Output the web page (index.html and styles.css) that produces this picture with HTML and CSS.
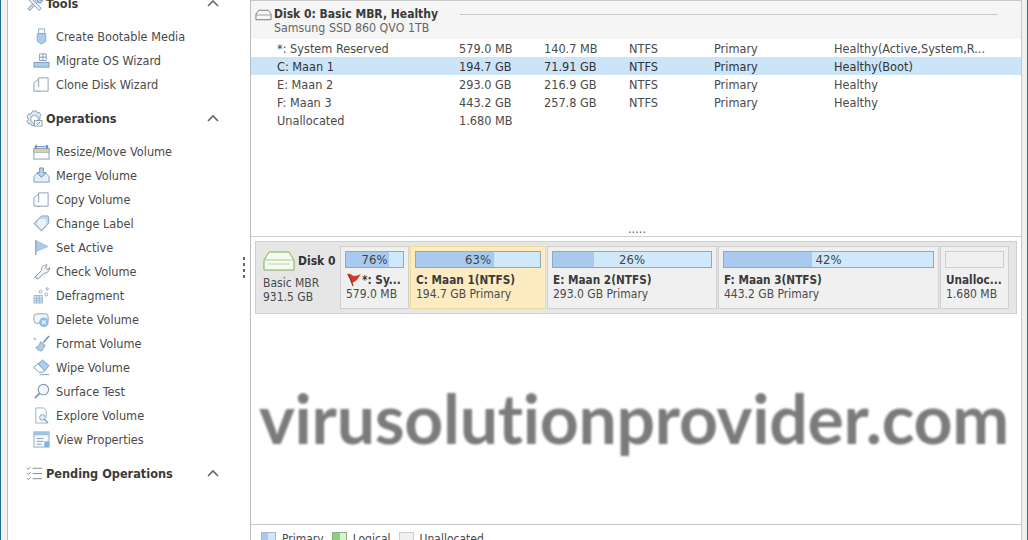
FILE: index.html
```html
<!DOCTYPE html>
<html lang="en">
<head>
    <meta charset="UTF-8">
    <title>Partition Wizard</title>
    <link rel="stylesheet" href="styles.css">
</head>
<body>
    <div class="window">
        <aside class="sidebar">
            <div class="side-inner">
                <div class="group-head tools-head">
                    <svg class="head-icon" viewBox="0 0 18 18"><path d="M2 14.500 12 4l2 2L4 16.500z" fill="#c5def3" stroke="#6f8ba3" stroke-width=".9"/><path d="M4 2l12 12-2 2.500L2 4z" fill="#eef3f7" stroke="#6f8ba3" stroke-width=".9"/><path d="M11 3c1-2 4-2 5.500 0l-2 1 1 2 2-.500c0 2-2 3.500-4 3z" fill="#b9d4ea" stroke="#6f8ba3" stroke-width=".8"/></svg>
                    <span>Tools</span>
                    <svg class="chevron" viewBox="0 0 12 8"><path d="M1 7l5-5 5 5" fill="none" stroke="#666" stroke-width="1.600"/></svg>
                </div>
                <ul class="items">
                    <li><svg class="icon" viewBox="0 0 18 18"><rect x="6" y="1" width="6" height="5" fill="#fff" stroke="#8aa9c4"/><path d="M4.500 6h9v8l-4.500 3-4.500-3z" fill="#a9cdee" stroke="#8aa9c4"/></svg>Create Bootable Media</li>
                    <li><svg class="icon" viewBox="0 0 18 18"><path d="M7 2h7v7H7zM10.500 2v7M7 5.500h7" fill="#fff" stroke="#7f9db9"/><rect x="1" y="11" width="16" height="5" fill="#a9cdee" stroke="#7f9db9"/></svg>Migrate OS Wizard</li>
                    <li><svg class="icon" viewBox="0 0 18 18"><path d="M1 16V7l4-3h3v12z" fill="#f4f8fb" stroke="#8aa0b3"/><path d="M6 12V2h10v14H4" fill="#fff" stroke="#8aa0b3"/></svg>Clone Disk Wizard</li>
                </ul>
                <div class="group-head">
                    <svg class="head-icon" viewBox="0 0 18 18"><path d="M7 1h4l1 2 2-.500 2 3-1.500 2 .500 2-2 2v-2a4 4 0 1 0-5 4l1 3H6l-1-2-2 .500-2-3 1.500-2L1 7l2-3 2 .500z" fill="#dbe8f2" stroke="#6f8ba3" stroke-width=".8"/><rect x="9" y="11" width="8" height="6" fill="#fff" stroke="#6f8ba3" stroke-width=".8"/><path d="M11 14l1.500 1.500 2.500-3" fill="none" stroke="#4f9a5b"/></svg>
                    <span>Operations</span>
                    <svg class="chevron" viewBox="0 0 12 8"><path d="M1 7l5-5 5 5" fill="none" stroke="#666" stroke-width="1.600"/></svg>
                </div>
                <ul class="items">
                    <li><svg class="icon" viewBox="0 0 18 18"><rect x="1" y="6" width="16" height="11" fill="#fff" stroke="#7f9db9"/><rect x="1" y="6" width="16" height="4" fill="#e9c9a0" stroke="#7f9db9" stroke-width=".6"/><path d="M2 4h14M2 4l2-2M2 4l2 2M16 4l-2-2M16 4l-2 2" fill="none" stroke="#4f86b8" stroke-width="1.200"/></svg>Resize/Move Volume</li>
                    <li><svg class="icon" viewBox="0 0 18 18"><path d="M1 10l3-3h10l3 3v6H1z" fill="#e5eff7" stroke="#7f9db9"/><path d="M7 1h4v5h3l-5 5-5-5h3z" fill="#b7d5ee" stroke="#6f8ba3"/></svg>Merge Volume</li>
                    <li><svg class="icon" viewBox="0 0 18 18"><path d="M1 16V7l4-3h3v12z" fill="#f4f8fb" stroke="#8aa0b3"/><path d="M6 12V2h10v14H4" fill="#fff" stroke="#8aa0b3"/></svg>Copy Volume</li>
                    <li><svg class="icon" viewBox="0 0 18 18"><path d="M9 1h7l1 7-8 9-8-8z" fill="#c5def3" stroke="#7f9db9"/><path d="M7 3.500h7l1 6-6 6-6-6z" fill="#e9f3fb" stroke="#a5c0d6" stroke-width=".6"/></svg>Change Label</li>
                    <li><svg class="icon" viewBox="0 0 18 18"><path d="M3 1v16" stroke="#7f9db9" stroke-width="1.400"/><path d="M4 2l12 6-12 5z" fill="#a9cdee" stroke="#8aa9c4" stroke-width=".6"/></svg>Set Active</li>
                    <li><svg class="icon" viewBox="0 0 18 18"><path d="M2 15l7-7c-1-3 2-6 6-6l-2 3 2 2 2.500-2c0 4-3 6-6 6l-6 6z" fill="#eef4f9" stroke="#7f94a8"/></svg>Check Volume</li>
                    <li><svg class="icon" viewBox="0 0 18 18"><path d="M1 9h9v8H1zM4 9v8M7 9v8M1 12h9M1 14.500h9" fill="#dce9f4" stroke="#8aa9c4" stroke-width=".8"/><circle cx="8" cy="5" r="1.500" fill="#fff" stroke="#7f94a8" stroke-width=".8"/><circle cx="15" cy="2" r="1.200" fill="#fff" stroke="#7f94a8" stroke-width=".8"/><circle cx="14" cy="8" r="1.500" fill="#fff" stroke="#7f94a8" stroke-width=".8"/></svg>Defragment</li>
                    <li><svg class="icon" viewBox="0 0 18 18"><rect x="1" y="3" width="15" height="10" rx="3" fill="#f1f6fa" stroke="#8aa0b3"/><circle cx="11.500" cy="12" r="5" fill="#8fbde3"/><path d="M9.500 10l4 4m0-4l-4 4" stroke="#fff" stroke-width="1.200"/></svg>Delete Volume</li>
                    <li><svg class="icon" viewBox="0 0 18 18"><path d="M17 1l-6 7" stroke="#6f8ba3" stroke-width="1.600"/><path d="M8 7l5 4-4 6c-3 0-5-2-6-4 2 0 4-2 5-6z" fill="#a9cdee" stroke="#6f8ba3" stroke-width=".7"/><circle cx="2" cy="4" r="1" fill="#fff" stroke="#7f94a8" stroke-width=".6"/></svg>Format Volume</li>
                    <li><svg class="icon" viewBox="0 0 18 18"><path d="M10 1l7 6-5 6H6L1 9z" fill="#a9cdee" stroke="#7f9db9"/><path d="M5 5l7 7-1 2H6L1 9z" fill="#fff" stroke="#7f9db9"/><path d="M7 16.500h10" stroke="#7f9db9"/></svg>Wipe Volume</li>
                    <li><svg class="icon" viewBox="0 0 18 18"><circle cx="11" cy="7" r="5.500" fill="#f2f8fd" stroke="#7f9db9" stroke-width="1.200"/><path d="M7 11l-5 5" stroke="#7f9db9" stroke-width="2"/></svg>Surface Test</li>
                    <li><svg class="icon" viewBox="0 0 18 18"><path d="M3 1h8l3 3v7M3 1v16h12" fill="#fff" stroke="#9aaebf"/><circle cx="10" cy="11" r="3" fill="#e2eef8" stroke="#7f9db9"/><path d="M12 13l4 4" stroke="#7f9db9" stroke-width="1.400"/></svg>Explore Volume</li>
                    <li><svg class="icon" viewBox="0 0 18 18"><rect x="1" y="1" width="16" height="16" fill="#f4f8fb" stroke="#8aa9c4"/><rect x="1" y="1" width="16" height="3.500" fill="#9cc4e6"/><path d="M4 8h7M4 11h7M4 14h5" stroke="#8aa0b3"/><rect x="12" y="11" width="5" height="6" fill="#7fb2df"/></svg>View Properties</li>
                </ul>
                <div class="group-head pending-head">
                    <svg class="head-icon" viewBox="0 0 18 18"><path d="M7 3.500h10M7 9h10M7 14.500h10" stroke="#8a8a8a"/><path d="M1 3l1.500 1.500L5 2M1 8.500L2.500 10 5 7.500M1 14l1.500 1.500L5 13" fill="none" stroke="#777" stroke-width=".9"/></svg>
                    <span>Pending Operations</span>
                    <svg class="chevron" viewBox="0 0 12 8"><path d="M1 7l5-5 5 5" fill="none" stroke="#666" stroke-width="1.600"/></svg>
                </div>
            </div>
            <div class="grip"><i></i><i></i><i></i><i></i></div>
        </aside>

        <main class="content">
            <div class="disk-head">
                <svg class="disk-head-icon" viewBox="0 0 18 12"><path d="M1 11V5l3-4h10l3 4v6z" fill="#f7f7f7" stroke="#777"/><path d="M1 6h16" stroke="#999"/></svg>
                <div class="disk-head-text">
                    <b>Disk 0: Basic MBR, Healthy</b>
                    <span>Samsung SSD 860 QVO 1TB</span>
                </div>
                <div class="disk-head-line"></div>
            </div>
            <div class="table">
                <div class="row"><span>*: System Reserved</span><span>579.0 MB</span><span>140.7 MB</span><span>NTFS</span><span>Primary</span><span>Healthy(Active,System,R...</span></div>
                <div class="row selected"><span>C: Maan 1</span><span>194.7 GB</span><span>71.91 GB</span><span>NTFS</span><span>Primary</span><span>Healthy(Boot)</span></div>
                <div class="row"><span>E: Maan 2</span><span>293.0 GB</span><span>216.9 GB</span><span>NTFS</span><span>Primary</span><span>Healthy</span></div>
                <div class="row"><span>F: Maan 3</span><span>443.2 GB</span><span>257.8 GB</span><span>NTFS</span><span>Primary</span><span>Healthy</span></div>
                <div class="row"><span>Unallocated</span><span>1.680 MB</span></div>
            </div>
            <div class="splitter">.....</div>
            <div class="disk-map">
                <div class="disk-info">
                    <div class="disk-title">
                        <svg class="disk-icon" viewBox="0 0 32 20"><path d="M1 19V9l5-8h20l5 8v10z" fill="#f5fbef" stroke="#7fae5a"/><path d="M1 9h30" stroke="#a7c98c"/><path d="M5 13h22" stroke="#b9d3a5"/></svg>
                        <b>Disk 0</b>
                    </div>
                    <div>Basic MBR</div>
                    <div>931.5 GB</div>
                </div>
                <div class="part part-sys">
                    <div class="bar"><div class="fill" style="width:76%"></div><span>76%</span></div>
                    <div class="part-name"><svg class="flag" viewBox="0 0 16 14"><path d="M1 1c4-1 5 2 7 2s5-1 7-2l-4 6-3 2-2 1z" fill="#d43a2a"/><path d="M3 2l4 11" stroke="#7a3a30" stroke-width="1.200"/></svg><b>*: Sy...</b></div>
                    <div class="part-size">579.0 MB</div>
                </div>
                <div class="part part-c selected">
                    <div class="bar"><div class="fill" style="width:63%"></div><span>63%</span></div>
                    <div class="part-name"><b>C: Maan 1(NTFS)</b></div>
                    <div class="part-size">194.7 GB Primary</div>
                </div>
                <div class="part part-e">
                    <div class="bar"><div class="fill" style="width:26%"></div><span>26%</span></div>
                    <div class="part-name"><b>E: Maan 2(NTFS)</b></div>
                    <div class="part-size">293.0 GB Primary</div>
                </div>
                <div class="part part-f">
                    <div class="bar"><div class="fill" style="width:42%"></div><span>42%</span></div>
                    <div class="part-name"><b>F: Maan 3(NTFS)</b></div>
                    <div class="part-size">443.2 GB Primary</div>
                </div>
                <div class="part part-un">
                    <div class="bar empty"></div>
                    <div class="part-name"><b>Unalloc...</b></div>
                    <div class="part-size">1.680 MB</div>
                </div>
            </div>
            <div class="watermark">virusolutionprovider.com</div>
            <div class="legend">
                <span class="legend-item"><i class="swatch primary"></i>Primary</span>
                <span class="legend-item"><i class="swatch logical"></i>Logical</span>
                <span class="legend-item"><i class="swatch unalloc"></i>Unallocated</span>
            </div>
        </main>
    </div>
</body>
</html>
```

FILE: styles.css
```css
html, body {
    margin: 0;
    padding: 0;
    height: 540px;
    overflow: hidden;
}
body {
    background: #f0f0f0;
    font-family: 'DejaVu Sans Condensed', 'DejaVu Sans', sans-serif;
    font-size: 12.6px;
    color: #4a4a4a;
}
.window {
    height: 540px;
    box-sizing: border-box;
    border-left: 1px solid #1f6f96;
    border-right: 1px solid #1f6f96;
    padding: 0 5px 0 6px;
    display: flex;
}
.sidebar {
    position: relative;
    width: 244px;
    flex: none;
    box-sizing: border-box;
    background: #fff;
    border-left: 1px solid #bdbdbd;
    border-right: 1px solid #bdbdbd;
    overflow: hidden;
}
.side-inner {
    margin-top: -9px;
}
.group-head {
    height: 24px;
    display: flex;
    align-items: center;
    padding-left: 18px;
    margin-top: 10px;
    margin-bottom: 9px;
    font-weight: bold;
    font-size: 12.6px;
    color: #3a3a3a;
}
.tools-head {
    margin-top: 0;
    margin-bottom: 9px;
}
.pending-head {
    margin-top: 10px;
}
.head-icon {
    width: 17px;
    height: 17px;
    margin-right: 3px;
    flex: none;
}
.group-head span {
    flex: 1;
}
.chevron {
    width: 12px;
    height: 8px;
    margin-right: 31px;
}
.items {
    list-style: none;
    margin: 0;
    padding: 0;
}
.items li {
    height: 24px;
    display: flex;
    align-items: center;
    padding-left: 25px;
    padding-top: 1px;
    box-sizing: border-box;
    white-space: nowrap;
}
.icon {
    width: 17px;
    height: 17px;
    margin-right: 6px;
    flex: none;
}
.grip {
    position: absolute;
    right: 5px;
    top: 257px;
    display: flex;
    flex-direction: column;
    gap: 3px;
}
.grip i {
    width: 2px;
    height: 3px;
    background: #666;
}
.content {
    flex: 1;
    min-width: 0;
    background: #fff;
    border-right: 1px solid #c8c8c8;
    display: flex;
    flex-direction: column;
}
.disk-head {
    height: 39px;
    box-sizing: border-box;
    background: #f5f5f5;
    border-top: 1px solid #c8c8c8;
    padding: 6px 0 0 4px;
    display: flex;
    align-items: flex-start;
}
.disk-head-icon {
    width: 17px;
    height: 12px;
    margin: 2px 2px 0 0;
}
.disk-head-text {
    display: flex;
    flex-direction: column;
    line-height: 14px;
}
.disk-head-text b {
    color: #3a3a3a;
    font-size: 12px;
}
.disk-head-text span {
    color: #666;
    font-size: 12.3px;
    line-height: 15px;
}
.disk-head-line {
    flex: 1;
    height: 1px;
    background: #c8c8c8;
    margin: 7px 23px 0 22px;
}
.table {
    height: 187px;
    flex: none;
}
.row {
    height: 18px;
    line-height: 19px;
    display: grid;
    grid-template-columns: 182px 85px 85px 85px 120px 1fr;
    padding-left: 26px;
}
.row.selected {
    background: #cce4f8;
    color: #333;
}
.splitter {
    height: 11px;
    line-height: 5px;
    flex: none;
    text-align: center;
    color: #555;
    border-bottom: 1px solid #cfcfcf;
    box-sizing: border-box;
    padding-left: 2px;
}
.disk-map {
    margin: 4px 4px 0 4px;
    height: 73px;
    box-sizing: border-box;
    background: #e6e6e6;
    border: 1px solid #cfcfcf;
    padding: 4px 6px 4px 0;
    display: flex;
    flex: none;
    line-height: 14px;
    font-size: 12px;
}
.disk-info {
    width: 84px;
    flex: none;
    box-sizing: border-box;
    padding: 4px 0 0 7px;
}
.disk-title {
    display: flex;
    align-items: center;
    gap: 3px;
    height: 22px;
    margin-bottom: 4px;
}
.disk-title b {
    color: #333;
}
.disk-icon {
    width: 32px;
    height: 20px;
}
.part {
    box-sizing: border-box;
    flex: none;
    background: #f0f0f0;
    border: 1px solid #d0d0d0;
    padding: 4px 4px 0 4px;
    margin-right: 1px;
    overflow: hidden;
}
.part.selected {
    background: #fdebc2;
    border-color: #f1d999;
}
.part-sys { width: 69px; }
.part-c { width: 136px; }
.part-e { width: 170px; }
.part-f { width: 221px; }
.part-un { width: 69px; }
.bar {
    position: relative;
    height: 17px;
    box-sizing: border-box;
    background: #cfe9fb;
    border: 1px solid #8fa9c2;
    text-align: center;
    line-height: 16px;
    font-size: 13px;
    color: #444;
    margin-bottom: 4px;
}
.bar span {
    position: relative;
}
.fill {
    position: absolute;
    left: 0;
    top: 0;
    bottom: 0;
    background: #a9c9ef;
}
.bar.empty {
    background: #f0f0f0;
    border-color: #cfcfcf;
}
.part-name {
    display: flex;
    align-items: center;
    height: 15px;
    padding-left: 1px;
    white-space: nowrap;
    color: #3a3a3a;
}
.part-name b {
    font-size: 11.7px;
}
.part-size {
    padding-left: 1px;
    white-space: nowrap;
}
.flag {
    width: 16px;
    height: 14px;
    flex: none;
}
.watermark {
    flex: 1;
    padding: 64px 0 0 8px;
    font-family: 'Lato', sans-serif;
    font-weight: 700;
    font-size: 68px;
    letter-spacing: -0.3px;
    line-height: 80px;
    font-variant-ligatures: none;
    color: #7b7b7b;
    white-space: nowrap;
    filter: blur(0.8px);
}
.legend {
    height: 16px;
    flex: none;
    box-sizing: border-box;
    border-top: 1px solid #c8c8c8;
    display: flex;
    gap: 8px;
    padding: 7px 0 0 10px;
    line-height: 14px;
    font-size: 12px;
    white-space: nowrap;
}
.legend-item {
    display: flex;
}
.swatch {
    width: 15px;
    height: 14px;
    margin-right: 6px;
    box-sizing: border-box;
    border: 1px solid #a9b9c9;
}
.swatch.primary {
    background: linear-gradient(90deg, #a9c9ef 50%, #cfe9fb 50%);
}
.swatch.logical {
    background: linear-gradient(90deg, #8fd080 50%, #d8f3cf 50%);
    border-color: #8fae85;
}
.swatch.unalloc {
    background: #f0f0f0;
    border-color: #cfcfcf;
}
```
